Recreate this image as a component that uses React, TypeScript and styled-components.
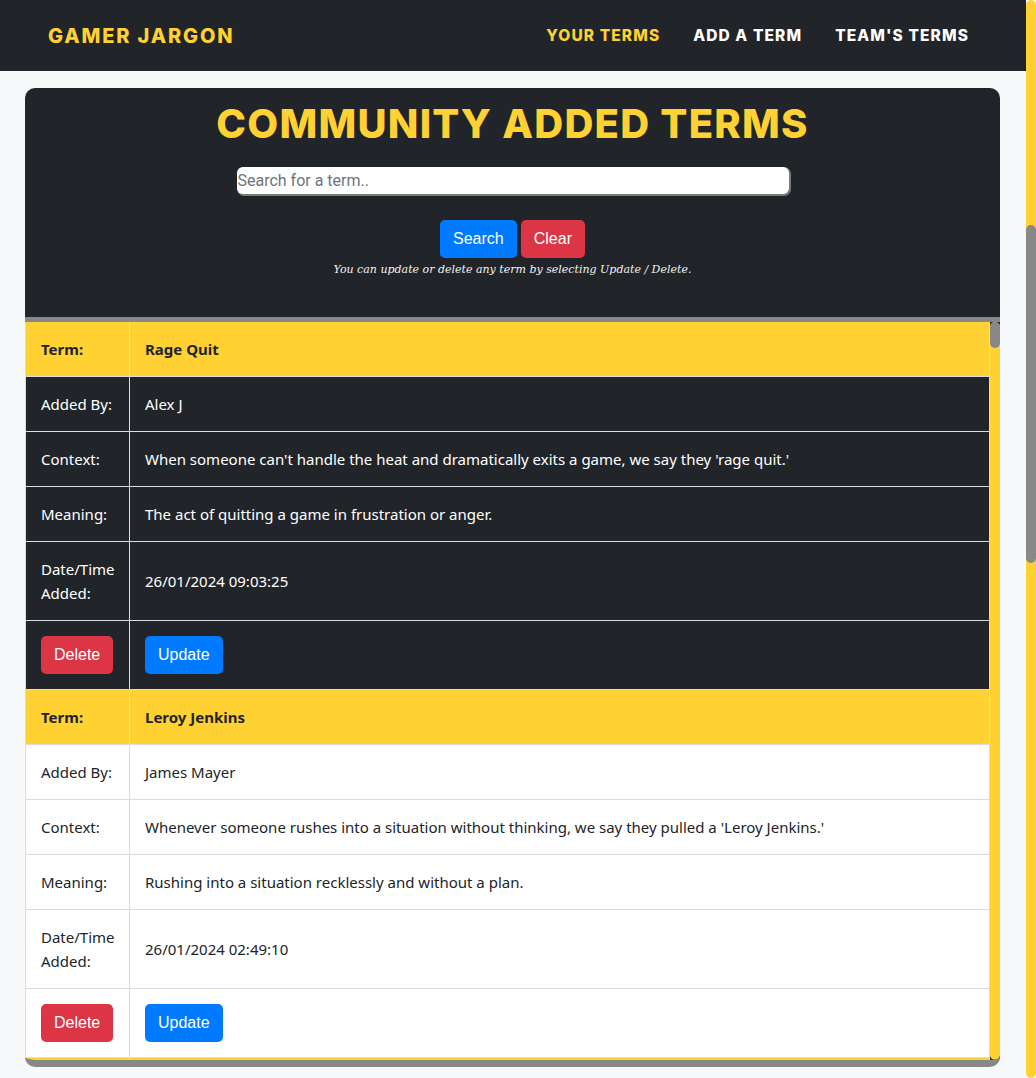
import React from "react";
import styled, { createGlobalStyle } from "styled-components";

const YELLOW = "#ffd133";
const DARK = "#212529";

const GlobalStyle = createGlobalStyle`
  html, body { margin: 0; padding: 0; height: 100%; overflow: hidden; }
  body {
    background: #f8f9fa;
    font-family: "Noto Sans", "Open Sans", sans-serif;
    color: ${DARK};
  }
  * { box-sizing: border-box; }
`;

const Page = styled.div`
  display: flex;
  height: 100vh;
`;

const Main = styled.div`
  flex: 1;
  min-width: 0;
  display: flex;
  flex-direction: column;
`;

const Rail = styled.div`
  width: 10px;
  flex: none;
  background: ${YELLOW};
  border-radius: 5px;
  display: flex;
  flex-direction: column;
`;

const Thumb = styled.div<{ $top: number; $h: number }>`
  margin-top: ${(p) => p.$top}px;
  height: ${(p) => p.$h}px;
  background: #888;
  border-radius: 5px;
`;

const NavBar = styled.nav`
  height: 71px;
  flex: none;
  background: ${DARK};
  display: flex;
  align-items: center;
  justify-content: space-between;
  padding: 0 57px 0 48px;
`;

const Brand = styled.div`
  font-family: Inter, "Noto Sans", sans-serif;
  font-weight: 800;
  font-size: 20px;
  letter-spacing: 1.85px;
  color: ${YELLOW};
`;

const NavLinks = styled.div`
  display: flex;
  gap: 33px;
`;

const NavLink = styled.a<{ $active?: boolean }>`
  font-family: Inter, "Noto Sans", sans-serif;
  font-weight: 800;
  font-size: 15.5px;
  letter-spacing: 1.1px;
  color: ${(p) => (p.$active ? YELLOW : "#ffffff")};
  text-decoration: none;
`;

const Content = styled.main`
  flex: 1;
  min-height: 0;
  display: flex;
  flex-direction: column;
  padding: 17px 26px 11px 25px;
`;

const Card = styled.section`
  flex: 1;
  min-height: 0;
  display: flex;
  flex-direction: column;
  background: ${DARK};
  border-radius: 10px;
  border-bottom: 7px solid #888;
  overflow: hidden;
`;

const CardHeader = styled.header`
  flex: none;
  display: flex;
  flex-direction: column;
  align-items: center;
  padding: 12px 0 39px;
`;

const Title = styled.h1`
  margin: 0;
  font-family: Inter, "Noto Sans", sans-serif;
  font-weight: 800;
  font-size: 40px;
  line-height: 48px;
  letter-spacing: 1.25px;
  color: ${YELLOW};
`;

const SearchInput = styled.input`
  margin-top: 19px;
  width: 552px;
  height: 27px;
  border: none;
  border-radius: 6px;
  padding: 0 1px;
  background: #fff;
  box-shadow: 1px 1px 0 1px #7a7a7a;
  font-family: Roboto, "Noto Sans", sans-serif;
  font-size: 16px;
  &::placeholder { color: #6c757d; }
`;

const ButtonRow = styled.div`
  margin-top: 26px;
  display: flex;
  gap: 4px;
`;

const Btn = styled.button<{ $variant: "primary" | "danger" }>`
  font-family: "Liberation Sans", Arial, sans-serif;
  font-size: 16px;
  line-height: 24px;
  padding: 7px 13px;
  border: none;
  border-radius: 5px;
  color: #fff;
  background: ${(p) => (p.$variant === "primary" ? "#007bff" : "#dc3545")};
  cursor: pointer;
`;

const Note = styled.p`
  margin: 4px 0 0;
  font-family: "DejaVu Serif", "Liberation Serif", serif;
  font-style: italic;
  font-size: 11px;
  line-height: 16px;
  color: #f2f2f2;
`;

const TableArea = styled.div`
  flex: 1;
  min-height: 0;
  display: flex;
  border-top: 5px solid #888;
`;

const Viewport = styled.div`
  flex: 1;
  min-width: 0;
  overflow: hidden;
`;

const Table = styled.table`
  width: 100%;
  border-collapse: collapse;
  table-layout: fixed;
  & > tbody:first-of-type > tr:first-child > td { border-top: none; }
`;

const Row = styled.tr<{ $tone: "head" | "dark" | "light" }>`
  background: ${(p) => (p.$tone === "head" ? YELLOW : p.$tone === "dark" ? DARK : "#ffffff")};
  color: ${(p) => (p.$tone === "dark" ? "#ffffff" : DARK)};
  font-weight: ${(p) => (p.$tone === "head" ? 700 : 400)};
`;

const Cell = styled.td`
  border: 1px solid #dcdcdc;
  padding: 15px 16px 15px 15px;
  font-size: 15px;
  line-height: 24px;
  vertical-align: middle;
`;

type Term = {
  term: string;
  by: string;
  context: string;
  meaning: string;
  date: string;
  tone: "dark" | "light";
};

const terms: Term[] = [
  {
    term: "Rage Quit",
    by: "Alex J",
    context:
      "When someone can't handle the heat and dramatically exits a game, we say they 'rage quit.'",
    meaning: "The act of quitting a game in frustration or anger.",
    date: "26/01/2024 09:03:25",
    tone: "dark",
  },
  {
    term: "Leroy Jenkins",
    by: "James Mayer",
    context:
      "Whenever someone rushes into a situation without thinking, we say they pulled a 'Leroy Jenkins.'",
    meaning: "Rushing into a situation recklessly and without a plan.",
    date: "26/01/2024 02:49:10",
    tone: "light",
  },
];

function TermRows({ t }: { t: Term }) {
  return (
    <tbody>
      <Row $tone="head">
        <Cell>Term:</Cell>
        <Cell>{t.term}</Cell>
      </Row>
      <Row $tone={t.tone}>
        <Cell>Added By:</Cell>
        <Cell>{t.by}</Cell>
      </Row>
      <Row $tone={t.tone}>
        <Cell>Context:</Cell>
        <Cell>{t.context}</Cell>
      </Row>
      <Row $tone={t.tone}>
        <Cell>Meaning:</Cell>
        <Cell>{t.meaning}</Cell>
      </Row>
      <Row $tone={t.tone}>
        <Cell>Date/Time Added:</Cell>
        <Cell>{t.date}</Cell>
      </Row>
      <Row $tone={t.tone}>
        <Cell>
          <Btn $variant="danger">Delete</Btn>
        </Cell>
        <Cell>
          <Btn $variant="primary">Update</Btn>
        </Cell>
      </Row>
    </tbody>
  );
}

export default function App() {
  return (
    <>
      <GlobalStyle />
      <Page>
        <Main>
          <NavBar>
            <Brand>GAMER JARGON</Brand>
            <NavLinks>
              <NavLink $active href="#">YOUR TERMS</NavLink>
              <NavLink href="#">ADD A TERM</NavLink>
              <NavLink href="#">TEAM'S TERMS</NavLink>
            </NavLinks>
          </NavBar>
          <Content>
            <Card>
              <CardHeader>
                <Title>COMMUNITY ADDED TERMS</Title>
                <SearchInput placeholder="Search for a term.." />
                <ButtonRow>
                  <Btn $variant="primary">Search</Btn>
                  <Btn $variant="danger">Clear</Btn>
                </ButtonRow>
                <Note>You can update or delete any term by selecting Update / Delete.</Note>
              </CardHeader>
              <TableArea>
                <Viewport>
                  <Table>
                    <colgroup>
                      <col style={{ width: 104 }} />
                      <col />
                    </colgroup>
                    {terms.map((t) => (
                      <TermRows key={t.term} t={t} />
                    ))}
                    <tbody>
                      <Row $tone="head">
                        <Cell />
                        <Cell />
                      </Row>
                    </tbody>
                  </Table>
                </Viewport>
                <Rail>
                  <Thumb $top={0} $h={26} />
                </Rail>
              </TableArea>
            </Card>
          </Content>
        </Main>
        <Rail>
          <Thumb $top={225} $h={338} />
        </Rail>
      </Page>
    </>
  );
}
